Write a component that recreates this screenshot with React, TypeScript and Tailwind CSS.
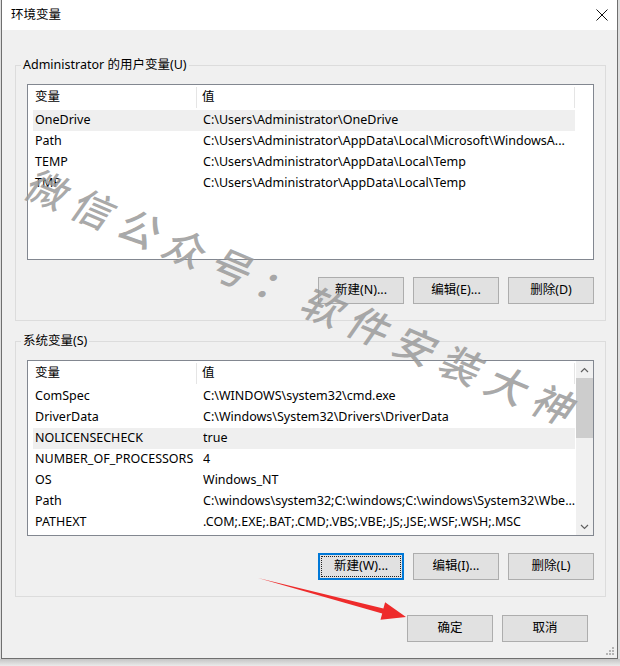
import React from 'react';

const userRows = [
  { name: 'OneDrive', value: 'C:\\Users\\Administrator\\OneDrive' },
  { name: 'Path', value: 'C:\\Users\\Administrator\\AppData\\Local\\Microsoft\\WindowsA...' },
  { name: 'TEMP', value: 'C:\\Users\\Administrator\\AppData\\Local\\Temp' },
  { name: 'TMP', value: 'C:\\Users\\Administrator\\AppData\\Local\\Temp' },
];

const systemRows = [
  { name: 'ComSpec', value: 'C:\\WINDOWS\\system32\\cmd.exe' },
  { name: 'DriverData', value: 'C:\\Windows\\System32\\Drivers\\DriverData' },
  { name: 'NOLICENSECHECK', value: 'true' },
  { name: 'NUMBER_OF_PROCESSORS', value: '4' },
  { name: 'OS', value: 'Windows_NT' },
  { name: 'Path', value: 'C:\\windows\\system32;C:\\windows;C:\\windows\\System32\\Wbe...' },
  { name: 'PATHEXT', value: '.COM;.EXE;.BAT;.CMD;.VBS;.VBE;.JS;.JSE;.WSF;.WSH;.MSC' },
];

const WinButton = ({ label, focused = false }: { label: string; focused?: boolean }) => (
  <button
    className={
      focused
        ? 'relative w-[86px] h-[27px] bg-[#e1e1e1] border-2 border-[#0078d7] text-black flex items-center justify-center'
        : 'relative w-[86px] h-[27px] bg-[#e1e1e1] border border-[#adadad] text-black flex items-center justify-center'
    }
  >
    {focused && <span className="absolute inset-[1px] border border-dotted border-[#222]" />}
    <span className="relative">{label}</span>
  </button>
);

const Chevron = ({ up }: { up?: boolean }) => (
  <svg width="9" height="6" viewBox="0 0 9 6">
    <path
      d={up ? 'M1 5 L4.5 1.5 L8 5' : 'M1 1 L4.5 4.5 L8 1'}
      fill="none"
      stroke="#606060"
      strokeWidth="1.2"
    />
  </svg>
);

const ListBox = ({
  rows,
  selected,
  scroll = false,
}: {
  rows: { name: string; value: string }[];
  selected: number;
  scroll?: boolean;
}) => (
  <div className="h-[176px] border border-[#828790] bg-white flex overflow-hidden">
    <div className="flex-1 pl-[5px] overflow-hidden">
      <div className="flex h-[25px] w-[542px]">
        <div className="w-[164px] pl-[2px] flex items-center border-r border-[#e5e5e5] my-[2px]">变量</div>
        <div className="flex-1 pl-[5px] flex items-center border-r border-[#e5e5e5] my-[2px]">值</div>
      </div>
      {rows.map((row, i) => (
        <div
          key={i}
          className={
            i === selected
              ? 'flex h-[21px] w-[542px] items-center bg-[#efefef] whitespace-nowrap'
              : 'flex h-[21px] w-[542px] items-center whitespace-nowrap'
          }
        >
          <div className="w-[170px] pl-[2px]">{row.name}</div>
          <div className="flex-1 overflow-hidden">{row.value}</div>
        </div>
      ))}
    </div>
    {scroll && (
      <div className="w-[17px] bg-[#f0f0f0] flex flex-col">
        <div className="h-[17px] flex items-center justify-center">
          <Chevron up />
        </div>
        <div className="flex-1 flex flex-col">
          <div className="h-[60px] bg-[#cdcdcd]" />
        </div>
        <div className="h-[17px] flex items-center justify-center">
          <Chevron />
        </div>
      </div>
    )}
  </div>
);

const GroupBox = ({ title, children, className }: { title: string; children: React.ReactNode; className?: string }) => (
  <fieldset className={`mx-0 border border-[#dcdcdc] px-[11px] pt-[11px] pb-[16px] ${className ?? ''}`}>
    <legend className="ml-[-6px] px-[2px] leading-[16px]">{title}</legend>
    {children}
  </fieldset>
);

export default function App() {
  return (
    <div className="relative w-[620px] h-[666px] bg-[#dedede] overflow-hidden font-['Noto_Sans','Noto_Sans_CJK_SC',sans-serif] text-[12.5px] text-black">
      <div className="ml-[1px] w-[617px] h-[659px] border-x border-b border-[#6f6f6f] bg-[#f0f0f0] flex flex-col">
        {/* title bar */}
        <div className="h-[30px] bg-white flex items-center justify-between pl-[9px] pr-[8px]">
          <span>环境变量</span>
          <svg width="12" height="12" viewBox="0 0 12 12" className="mr-[1px]">
            <path d="M0.5 0.5 L11.5 11.5 M11.5 0.5 L0.5 11.5" stroke="#111" strokeWidth="1" />
          </svg>
        </div>

        <div className="flex-1 relative pt-[27px] pl-[13px] pr-[11px] flex flex-col">
          <GroupBox title="Administrator 的用户变量(U)">
            <ListBox rows={userRows} selected={0} />
            <div className="mt-[17px] flex justify-end gap-[9px]">
              <WinButton label="新建(N)..." />
              <WinButton label="编辑(E)..." />
              <WinButton label="删除(D)" />
            </div>
          </GroupBox>

          <GroupBox title="系统变量(S)" className="mt-[12px]">
            <ListBox rows={systemRows} selected={2} scroll />
            <div className="mt-[17px] flex justify-end gap-[9px]">
              <WinButton label="新建(W)..." focused />
              <WinButton label="编辑(I)..." />
              <WinButton label="删除(L)" />
            </div>
          </GroupBox>

          <div className="mt-[18px] mr-[18px] flex justify-end gap-[9px]">
            <WinButton label="确定" />
            <WinButton label="取消" />
          </div>

          {/* resize grip */}
          <svg width="9" height="9" viewBox="0 0 9 9" className="absolute right-[2px] bottom-[2px]">
            <g fill="#b4b4b4">
              <rect x="6" y="0" width="2" height="2" />
              <rect x="3" y="3" width="2" height="2" />
              <rect x="6" y="3" width="2" height="2" />
              <rect x="0" y="6" width="2" height="2" />
              <rect x="3" y="6" width="2" height="2" />
              <rect x="6" y="6" width="2" height="2" />
            </g>
          </svg>
        </div>
      </div>
      <div className="h-[7px] bg-gradient-to-b from-[#c4c4c4] to-[#ebebeb]" />

      {/* watermark */}
      <div className="absolute left-[307px] top-[298px] -translate-x-1/2 -translate-y-1/2 rotate-[23deg] whitespace-nowrap text-[40px] leading-none tracking-[10px] font-medium text-[#9a9a9a]/85 font-['Noto_Sans_CJK_SC',sans-serif] pointer-events-none">
        <span className="inline-block -skew-x-12">微信公众号：软件安装大神</span>
      </div>

      {/* red arrow */}
      <svg width="620" height="666" className="absolute left-0 top-0 pointer-events-none">
        <polygon
          points="258,578 383.4,608.6 385.1,602.3 406,617 380.5,619.7 382.2,613.4"
          fill="#ee2b2b"
        />
      </svg>
    </div>
  );
}
